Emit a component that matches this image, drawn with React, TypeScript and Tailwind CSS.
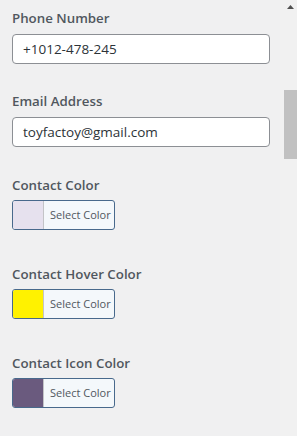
import React from "react";

function Label({ children }: { children: React.ReactNode }) {
  return (
    <div className="h-[18px] text-[13.3px] leading-[18px] font-semibold text-[#50575e]">{children}</div>
  );
}

function TextField({ value }: { value: string }) {
  return (
    <div className="mt-[7px] h-[30px] w-[258px] rounded-[4px] border border-[#8c8f94] bg-white pl-[10px] flex items-center text-[13.5px] text-[#2c3338]">
      {value}
    </div>
  );
}

function ColorButton({ color }: { color: string }) {
  return (
    <div className="mt-[6px] flex h-[30px] w-[103px] overflow-hidden rounded-[3px] border border-[#48698c] bg-[#f4f8fb]">
      <div className="h-full w-[31px] border-r border-[#c3c4c7]" style={{ backgroundColor: color }} />
      <div className="flex flex-1 items-center pl-[6px] text-[11px] text-[#50575e]">Select Color</div>
    </div>
  );
}

export default function App() {
  return (
    <div
      className="flex h-[436px] w-[297px] overflow-hidden bg-[#f0f0f1]"
      style={{ fontFamily: '"Open Sans", "Noto Sans", sans-serif' }}
    >
      <div className="flex-1 pl-[12px] pt-[9px]">
        <Label>Phone Number</Label>
        <TextField value="+1012-478-245" />
        <div className="mt-[28px]">
          <Label>Email Address</Label>
        </div>
        <TextField value="toyfactoy@gmail.com" />
        <div className="mt-[29px]">
          <Label>Contact Color</Label>
        </div>
        <ColorButton color="#e6e1ee" />
        <div className="mt-[35px]">
          <Label>Contact Hover Color</Label>
        </div>
        <ColorButton color="#fff200" />
        <div className="mt-[35px]">
          <Label>Contact Icon Color</Label>
        </div>
        <ColorButton color="#6a5a7e" />
      </div>
      <div className="relative w-[17px] bg-[#f1f1f1]">
        <svg className="absolute left-[7px] top-[5px]" width="7" height="4" viewBox="0 0 7 4">
          <polygon points="3.5,0 7,4 0,4" fill="#505050" />
        </svg>
        <div className="absolute left-[4px] top-[90px] h-[69px] w-[13px] bg-[#c1c1c1]" />
      </div>
    </div>
  );
}
